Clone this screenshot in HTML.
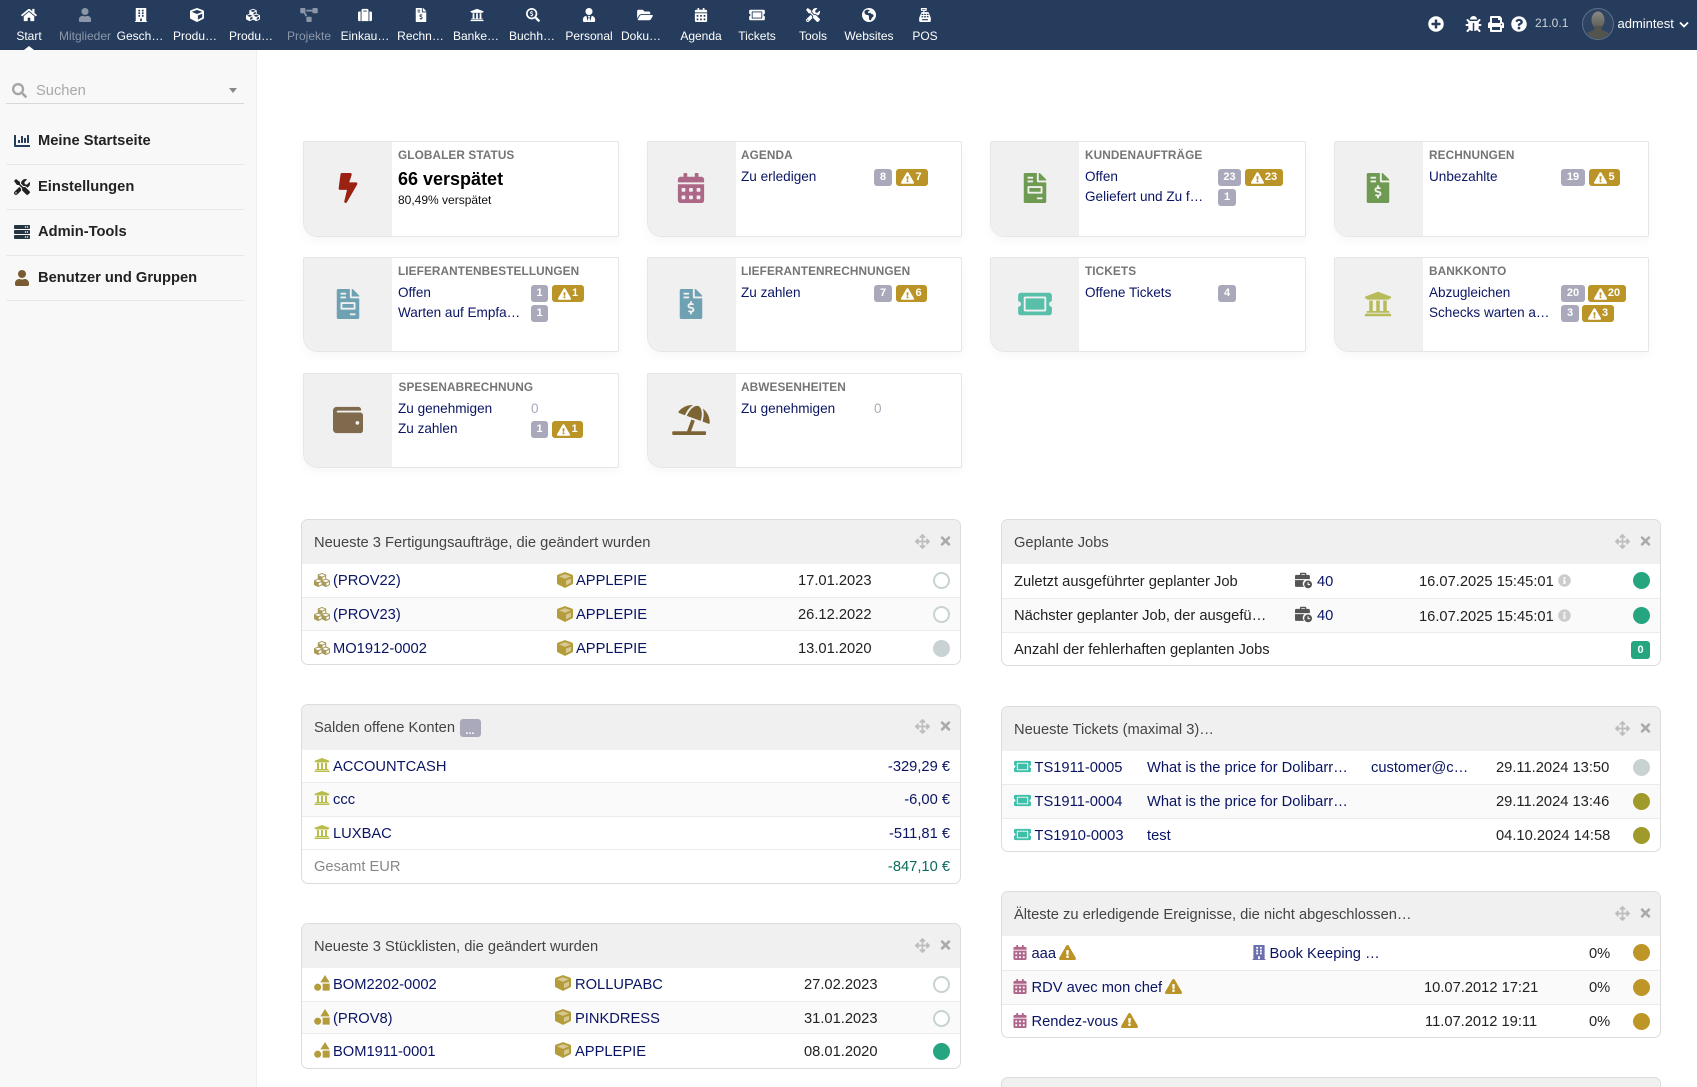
<!DOCTYPE html>
<html lang="de"><head><meta charset="utf-8"><title>Dolibarr</title>
<style>
html{margin:0;padding:0;background:#fff;overflow:hidden;width:1697px;height:1087px}
body{margin:0;padding:0;background:#fff;position:relative;width:1697px;height:1087px;overflow:hidden;font-family:"Liberation Sans",sans-serif;font-size:14.7px;color:#222}
div,span,svg{position:absolute;box-sizing:border-box}
.t{white-space:nowrap;line-height:20px;height:20px}
.n{color:#0a1464}
.m{top:26px;width:56px;text-align:center;font-size:12px;line-height:20px;color:#fff;white-space:nowrap}
.d{color:#8b97a9}
.mi{top:8px;width:20px;height:14px;fill:#fff}
.mi.d{fill:#8b97a9}
.sb{left:38px;font-weight:700;font-size:14.7px;color:#222}
.sl{left:6px;width:238px;height:1px;background:#e8e8e8}
.si{left:14px;width:16px;height:16px}
.c{width:316px;height:95px;background:#fff;border:1px solid #e6e6e6;border-radius:2px 2px 2px 15px;box-shadow:0 4px 10px rgba(0,0,0,.035);overflow:hidden}
.c i{position:absolute;left:0;top:0;bottom:0;width:88px;background:#f0f0f0}
.ti{font-size:11.8px;font-weight:700;color:#757575;letter-spacing:.1px}
.r{font-size:13.55px;color:#0a1464}
.b{height:17px;border-radius:3px;color:#fff;font-size:11px;font-weight:700;display:flex;align-items:center;justify-content:center;line-height:17px}
.g{background:#a9a9bb}
.y{background:#bb9427}
.b svg{position:static;width:13px;height:12px;fill:#fff;margin-right:1px}
.p{background:#fff;border:1px solid #dcdcdc;border-radius:7px;overflow:hidden}
.ph{background:#f0f0f0;left:0;right:0;top:0}
.ev{background:#fafafa;left:0;right:0}
.se{left:0;right:0;height:1px;background:#ebebeb}
.h{color:#444}
.mv{width:15px;height:15px;fill:#bdbdbd}
.cl{width:11px;height:14px;fill:#aaa}
.k{width:17px;height:17px;border-radius:50%}
.o{border:2px solid #c9d2d2;background:#fff}
.ic{width:16px;height:16px}
.cu{fill:#b49c3a}
.cs{fill:#a89a58}
.bk{fill:#b8bd4a}
.tk{fill:#3fbfa8}
.cal{fill:#b0668a}
.wr{fill:#bb9427}
.rt{text-align:right}
</style></head><body>
<svg width="0" height="0" style="position:absolute"><defs>
<symbol id="home" viewBox="0 0 576 512"><path d="M280.37 148.26L96 300.11V464a16 16 0 0 0 16 16l112.06-.29a16 16 0 0 0 15.92-16V368a16 16 0 0 1 16-16h64a16 16 0 0 1 16 16v95.64a16 16 0 0 0 16 16.05L464 480a16 16 0 0 0 16-16V300L295.67 148.26a12.19 12.19 0 0 0-15.3 0zM571.6 251.47L488 182.56V44.05a12 12 0 0 0-12-12h-56a12 12 0 0 0-12 12v72.61L318.47 43a48 48 0 0 0-61 0L4.34 251.47a12 12 0 0 0-1.6 16.9l25.5 31A12 12 0 0 0 45.15 301l235.22-193.74a12.19 12.19 0 0 1 15.3 0L530.9 301a12 12 0 0 0 16.9-1.6l25.5-31a12 12 0 0 0-1.7-16.93z"/></symbol>
<symbol id="user" viewBox="0 0 448 512"><path d="M224 256c70.7 0 128-57.3 128-128S294.7 0 224 0 96 57.3 96 128s57.3 128 128 128zm89.6 32h-16.7c-22.2 10.2-46.9 16-72.9 16s-50.6-5.8-72.9-16h-16.7C60.2 288 0 348.2 0 422.4V464c0 26.5 21.5 48 48 48h352c26.5 0 48-21.5 48-48v-41.6c0-74.2-60.2-134.4-134.4-134.4z"/></symbol>
<symbol id="bld" viewBox="0 0 448 512"><path d="M436 480h-20V24c0-13.255-10.745-24-24-24H56C42.745 0 32 10.745 32 24v456H12c-6.627 0-12 5.373-12 12v20h448v-20c0-6.627-5.373-12-12-12zM128 76c0-6.627 5.373-12 12-12h40c6.627 0 12 5.373 12 12v40c0 6.627-5.373 12-12 12h-40c-6.627 0-12-5.373-12-12V76zm0 96c0-6.627 5.373-12 12-12h40c6.627 0 12 5.373 12 12v40c0 6.627-5.373 12-12 12h-40c-6.627 0-12-5.373-12-12v-40zm52 148h-40c-6.627 0-12-5.373-12-12v-40c0-6.627 5.373-12 12-12h40c6.627 0 12 5.373 12 12v40c0 6.627-5.373 12-12 12zm76 160h-64v-84c0-6.627 5.373-12 12-12h40c6.627 0 12 5.373 12 12v84zm64-172c0 6.627-5.373 12-12 12h-40c-6.627 0-12-5.373-12-12v-40c0-6.627 5.373-12 12-12h40c6.627 0 12 5.373 12 12v40zm0-96c0 6.627-5.373 12-12 12h-40c-6.627 0-12-5.373-12-12v-40c0-6.627 5.373-12 12-12h40c6.627 0 12 5.373 12 12v40zm0-96c0 6.627-5.373 12-12 12h-40c-6.627 0-12-5.373-12-12V76c0-6.627 5.373-12 12-12h40c6.627 0 12 5.373 12 12v40z"/></symbol>
<symbol id="cube" viewBox="0 0 512 512"><path d="M239.1 6.3l-208 78c-18.7 7-31.1 25-31.1 45v225.100c0 18.200 10.300 34.800 26.500 42.900l208 104c13.500 6.800 29.400 6.800 42.900 0l208-104c16.300-8.100 26.500-24.800 26.500-42.900V129.300c0-20-12.400-37.900-31.100-44.900l-208-78C262 2.200 250 2.200 239.100 6.300zM256 68.400l192 72v1.100l-192 78-192-78v-1.100l192-72zm32 356V275.500l160-65v133.900l-160 80z"/></symbol>
<symbol id="cubef" viewBox="0 0 512 512"><path opacity=".55" d="M256 40 490 130v220L256 480 22 350V130z"/><path d="M239.1 6.3l-208 78c-18.7 7-31.1 25-31.1 45v225.100c0 18.200 10.300 34.800 26.500 42.900l208 104c13.500 6.800 29.400 6.800 42.900 0l208-104c16.300-8.100 26.500-24.800 26.500-42.900V129.300c0-20-12.400-37.900-31.100-44.900l-208-78C262 2.200 250 2.200 239.100 6.300zM256 68.400l192 72v1.100l-192 78-192-78v-1.100l192-72zm32 356V275.500l160-65v133.900l-160 80z"/></symbol>
<symbol id="cubes" viewBox="0 0 512 512"><path d="M488.6 250.2L392 214V105.500c0-15-9.300-28.400-23.400-33.700l-100-37.500c-8.100-3.100-17.100-3.100-25.300 0l-100 37.500c-14.100 5.300-23.400 18.700-23.400 33.700V214l-96.600 36.200C9.300 255.500 0 268.900 0 283.900V394c0 13.600 7.700 26.100 19.900 32.200l100 50c10.100 5.100 22.100 5.100 32.200 0l103.900-52 103.900 52c10.100 5.100 22.100 5.100 32.200 0l100-50c12.200-6.100 19.900-18.600 19.900-32.200V283.900c0-15-9.300-28.400-23.400-33.700zM358 214.800l-85 31.900v-68.200l85-37v73.300zM154 104.100l102-38.200 102 38.200v.6l-102 41.400-102-41.400v-.6zm84 291.100l-85 42.500v-79.100l85-38.800v75.400zm0-112l-102 41.400-102-41.400v-.6l102-38.200 102 38.200v.6zm240 112l-85 42.500v-79.100l85-38.800v75.400zm0-112l-102 41.400-102-41.400v-.6l102-38.200 102 38.200v.6z"/></symbol>
<symbol id="proj" viewBox="0 0 640 512"><path d="M384 320H256c-17.67 0-32 14.33-32 32v128c0 17.67 14.33 32 32 32h128c17.67 0 32-14.33 32-32V352c0-17.67-14.33-32-32-32zM192 32c0-17.67-14.33-32-32-32H32C14.33 0 0 14.33 0 32v128c0 17.67 14.33 32 32 32h95.72l73.16 128.03c11.66-19.83 33.16-32.03 56.12-32.03h-.5L184.28 160H192V32zM608 0H480c-17.67 0-32 14.33-32 32v32H224v64h224v32c0 17.67 14.33 32 32 32h128c17.67 0 32-14.33 32-32V32c0-17.67-14.33-32-32-32z"/></symbol>
<symbol id="case" viewBox="0 0 512 512"><path d="M128 480h256V80c0-26.500-21.500-48-48-48H176c-26.500 0-48 21.500-48 48v400zm64-384h128v32H192V96zm320 80v256c0 26.500-21.500 48-48 48h-48V128h48c26.500 0 48 21.500 48 48zM96 480H48c-26.500 0-48-21.500-48-48V176c0-26.500 21.500-48 48-48h48v352z"/></symbol>
<symbol id="bill" viewBox="0 0 384 512"><path d="M377 105L279.100 7c-4.500-4.500-10.600-7-17-7H256v128h128v-6.100c0-6.300-2.500-12.400-7-16.900zm-153 31V0H24C10.700 0 0 10.700 0 24v464c0 13.300 10.700 24 24 24h336c13.300 0 24-10.700 24-24V160H248c-13.200 0-24-10.800-24-24zM64 72c0-4.420 3.580-8 8-8h80c4.420 0 8 3.580 8 8v16c0 4.420-3.580 8-8 8H72c-4.420 0-8-3.580-8-8V72zm0 64c0-4.420 3.580-8 8-8h80c4.420 0 8 3.580 8 8v16c0 4.420-3.580 8-8 8H72c-4.420 0-8-3.580-8-8v-16zm144 263.880V424c0 4.420-3.580 8-8 8h-16c-4.420 0-8-3.580-8-8v-24.290c-11.290-.58-22.270-4.520-31.370-11.350-3.900-2.930-4.100-8.770-.57-12.140l11.750-11.210c2.770-2.640 6.890-2.760 10.130-.73 3.870 2.420 8.260 3.720 12.820 3.720h28.110c6.500 0 11.800-5.920 11.800-13.190 0-5.950-3.610-11.190-8.770-12.730l-45-13.500c-18.590-5.580-31.580-23.420-31.580-43.390 0-24.520 19.050-44.440 42.670-45.070V216c0-4.420 3.580-8 8-8h16c4.420 0 8 3.580 8 8v24.290c11.290.58 22.270 4.510 31.370 11.350 3.900 2.930 4.100 8.770.57 12.140l-11.750 11.210c-2.770 2.640-6.890 2.760-10.130.73-3.870-2.430-8.260-3.720-12.820-3.720h-28.110c-6.500 0-11.800 5.920-11.800 13.190 0 5.950 3.610 11.190 8.770 12.730l45 13.500c18.590 5.580 31.580 23.420 31.580 43.390 0 24.530-19.050 44.440-42.670 45.070z"/></symbol>
<symbol id="ord" viewBox="0 0 384 512"><path d="M288 256H96v64h192v-64zm89-151L279.100 7c-4.500-4.500-10.600-7-17-7H256v128h128v-6.100c0-6.300-2.500-12.400-7-16.900zm-153 31V0H24C10.700 0 0 10.700 0 24v464c0 13.300 10.700 24 24 24h336c13.300 0 24-10.700 24-24V160H248c-13.200 0-24-10.800-24-24zM64 72c0-4.420 3.580-8 8-8h80c4.420 0 8 3.580 8 8v16c0 4.420-3.580 8-8 8H72c-4.420 0-8-3.580-8-8V72zm0 64c0-4.420 3.580-8 8-8h80c4.420 0 8 3.580 8 8v16c0 4.420-3.580 8-8 8H72c-4.420 0-8-3.580-8-8v-16zm256 304c0 4.420-3.580 8-8 8h-80c-4.420 0-8-3.580-8-8v-16c0-4.420 3.580-8 8-8h80c4.420 0 8 3.580 8 8v16zm0-200v96c0 8.840-7.160 16-16 16H80c-8.840 0-16-7.160-16-16v-96c0-8.840 7.160-16 16-16h224c8.840 0 16 7.160 16 16z"/></symbol>
<symbol id="bank" viewBox="0 0 512 512"><path d="M496 128v16a8 8 0 0 1-8 8h-24v12c0 6.627-5.373 12-12 12H60c-6.627 0-12-5.373-12-12v-12H24a8 8 0 0 1-8-8v-16a8 8 0 0 1 4.941-7.392l232-88a7.996 7.996 0 0 1 6.118 0l232 88A8 8 0 0 1 496 128zm-24 304H40c-13.255 0-24 10.745-24 24v16a8 8 0 0 0 8 8h464a8 8 0 0 0 8-8v-16c0-13.255-10.745-24-24-24zM96 192v192H60c-6.627 0-12 5.373-12 12v20h416v-20c0-6.627-5.373-12-12-12h-36V192h-64v192h-64V192h-64v192h-64V192H96z"/></symbol>
<symbol id="acct" viewBox="0 0 512 512"><path d="M505.040 442.660l-99.710-99.690c-4.500-4.500-10.600-7-17-7h-16.300c27.600-35.300 44-79.690 44-127.990C416.030 93.090 322.920 0 208.020 0S0 93.090 0 207.980s93.110 207.980 208.020 207.980c48.300 0 92.710-16.400 128.010-44v16.300c0 6.400 2.500 12.500 7 17l99.710 99.690c9.400 9.400 24.600 9.400 33.900 0l28.300-28.300c9.400-9.400 9.400-24.590.1-33.990zm-297.020-90.700c-79.540 0-144-64.340-144-143.980 0-79.530 64.350-143.980 144-143.980 79.540 0 144 64.340 144 143.980 0 79.530-64.350 143.980-144 143.980zm27.110-152.540l-45.010-13.500c-5.160-1.550-8.770-6.780-8.770-12.730 0-7.270 5.300-13.190 11.800-13.190h28.110c4.560 0 8.960 1.290 12.820 3.720 3.240 2.030 7.360 1.910 10.130-.73l11.750-11.210c3.530-3.370 3.330-9.210-.57-12.140-9.100-6.830-20.080-10.770-31.370-11.350V112c0-4.420-3.580-8-8-8h-16c-4.420 0-8 3.580-8 8v16.120c-23.630.63-42.680 20.550-42.680 45.070 0 19.970 12.990 37.810 31.580 43.390l45.010 13.500c5.160 1.550 8.770 6.780 8.770 12.730 0 7.270-5.300 13.190-11.800 13.190h-28.100c-4.560 0-8.960-1.290-12.820-3.720-3.240-2.030-7.360-1.910-10.130.73l-11.750 11.210c-3.530 3.370-3.330 9.210.57 12.140 9.100 6.830 20.080 10.770 31.370 11.350V304c0 4.420 3.580 8 8 8h16c4.420 0 8-3.580 8-8v-16.120c23.630-.63 42.680-20.540 42.680-45.070 0-19.970-12.990-37.810-31.590-43.390z"/></symbol>
<symbol id="pers" viewBox="0 0 448 512"><path d="M224 256c70.700 0 128-57.300 128-128S294.700 0 224 0 96 57.300 96 128s57.300 128 128 128zm95.800 32.600L272 480l-32-136 32-56h-96l32 56-32 136-47.800-191.400C56.900 292 0 350.300 0 422.400V464c0 26.500 21.500 48 48 48h352c26.500 0 48-21.500 48-48v-41.600c0-72.100-56.900-130.400-128.200-133.800z"/></symbol>
<symbol id="fold" viewBox="0 0 576 512"><path d="M572.694 292.093L500.270 416.248A63.997 63.997 0 0 1 444.989 448H45.025c-18.523 0-30.064-20.093-20.731-36.093l72.424-124.155A64 64 0 0 1 152 256h399.964c18.523 0 30.064 20.093 20.730 36.093zM152 224h328v-48c0-26.510-21.490-48-48-48H272l-64-64H48C21.490 64 0 85.490 0 112v278.046l69.077-118.418C86.214 242.250 118.160 224 152 224z"/></symbol>
<symbol id="cal" viewBox="0 0 448 512"><path d="M0 464c0 26.500 21.500 48 48 48h352c26.500 0 48-21.500 48-48V192H0v272zm320-196c0-6.600 5.400-12 12-12h40c6.600 0 12 5.400 12 12v40c0 6.600-5.400 12-12 12h-40c-6.600 0-12-5.400-12-12v-40zm0 128c0-6.600 5.400-12 12-12h40c6.600 0 12 5.400 12 12v40c0 6.600-5.400 12-12 12h-40c-6.600 0-12-5.400-12-12v-40zM192 268c0-6.600 5.400-12 12-12h40c6.600 0 12 5.400 12 12v40c0 6.600-5.400 12-12 12h-40c-6.600 0-12-5.400-12-12v-40zm0 128c0-6.600 5.400-12 12-12h40c6.600 0 12 5.400 12 12v40c0 6.600-5.400 12-12 12h-40c-6.600 0-12-5.400-12-12v-40zM64 268c0-6.600 5.400-12 12-12h40c6.600 0 12 5.400 12 12v40c0 6.600-5.400 12-12 12H76c-6.600 0-12-5.400-12-12v-40zm0 128c0-6.600 5.400-12 12-12h40c6.600 0 12 5.400 12 12v40c0 6.600-5.400 12-12 12H76c-6.600 0-12-5.400-12-12v-40zM400 64h-48V16c0-8.800-7.200-16-16-16h-32c-8.800 0-16 7.200-16 16v48H160V16c0-8.800-7.200-16-16-16h-32c-8.800 0-16 7.200-16 16v48H48C21.500 64 0 85.500 0 112v48h448v-48c0-26.500-21.500-48-48-48z"/></symbol>
<symbol id="tick" viewBox="0 0 576 512"><path d="M128 160h320v192H128V160zm400 96c0 26.510 21.490 48 48 48v96c0 26.510-21.490 48-48 48H48c-26.510 0-48-21.490-48-48v-96c26.510 0 48-21.490 48-48s-21.490-48-48-48v-96c0-26.510 21.490-48 48-48h480c26.510 0 48 21.490 48 48v96c-26.510 0-48 21.490-48 48zm-48-104c0-13.255-10.745-24-24-24H120c-13.255 0-24 10.745-24 24v208c0 13.255 10.745 24 24 24h336c13.255 0 24-10.745 24-24V152z"/></symbol>
<symbol id="tools" viewBox="0 0 512 512"><path d="M501.100 395.700L384 278.600c-23.100-23.100-57.600-27.600-85.400-13.900L192 158.100V96L64 0 0 64l96 128h62.100l106.600 106.600c-13.600 27.800-9.200 62.300 13.900 85.400l117.100 117.100c14.600 14.600 38.200 14.600 52.700 0l52.700-52.700c14.500-14.600 14.500-38.200 0-52.700zM331.700 225c28.300 0 54.900 11 74.900 31l19.400 19.400c15.800-6.900 30.800-16.500 43.800-29.500 37.100-37.100 49.700-89.300 37.900-136.700-2.200-9-13.500-12.100-20.100-5.500l-74.400 74.400-67.900-11.300L334 98.900l74.400-74.400c6.600-6.600 3.400-17.900-5.700-20.200-47.400-11.700-99.600.9-136.600 37.900-28.500 28.500-41.900 66.100-41.200 103.600l82.100 82.100c8.100-1.900 16.500-2.900 24.700-2.900zm-103.900 82l-56.700-56.700L18.700 402.800c-25 25-25 65.500 0 90.500s65.500 25 90.500 0l123.600-123.600c-7.600-19.900-9.900-41.600-5-62.700zM64 472c-13.200 0-24-10.800-24-24 0-13.300 10.700-24 24-24s24 10.700 24 24c0 13.200-10.700 24-24 24z"/></symbol>
<symbol id="globe" viewBox="0 0 24 24"><path fill-rule="evenodd" d="M12 0a12 12 0 1 1 0 24 12 12 0 0 1 0-24zM7 3 4 6l1 4 3 2 3 0 1 3 0 5 3 1 2-4 3-3-1-3-3-1-2-2-3 1-1-2 2-2 2-1-3-1z"/></symbol>
<symbol id="pos" viewBox="0 0 24 24"><path fill-rule="evenodd" d="M5 0h10v5h-4v2h7l4 10v5a2 2 0 0 1-2 2H4a2 2 0 0 1-2-2v-5L6 7h3V5H5zM7 2v1h6V2zM6 10v2h3v-2zM10.500 10v2h3v-2zM15 10v2h3v-2zM6 14v2h3v-2zM10.500 14v2h3v-2zM15 14v2h3v-2zM7 19v2h10v-2z"/></symbol>
<symbol id="plus" viewBox="0 0 512 512"><path d="M256 8C119 8 8 119 8 256s111 248 248 248 248-111 248-248S393 8 256 8zm144 276c0 6.600-5.400 12-12 12h-92v92c0 6.600-5.400 12-12 12h-56c-6.600 0-12-5.400-12-12v-92h-92c-6.600 0-12-5.400-12-12v-56c0-6.600 5.400-12 12-12h92v-92c0-6.600 5.400-12 12-12h56c6.600 0 12 5.400 12 12v92h92c6.600 0 12 5.400 12 12v56z"/></symbol>
<symbol id="bug" viewBox="0 0 512 512"><path d="M511.988 288.900c-.478 17.430-15.217 31.100-32.653 31.100H424v16c0 21.864-4.882 42.584-13.600 61.145l60.228 60.228c12.496 12.497 12.496 32.758 0 45.255-12.498 12.497-32.759 12.496-45.256 0l-54.736-54.736C345.886 467.965 314.351 480 280 480V236c0-6.627-5.373-12-12-12h-24c-6.627 0-12 5.373-12 12v244c-34.351 0-65.886-12.035-90.636-32.108l-54.736 54.736c-12.498 12.497-32.759 12.496-45.256 0-12.496-12.497-12.496-32.758 0-45.255l60.228-60.228C92.882 378.584 88 357.864 88 336v-16H32.666C15.230 320 .491 306.330.013 288.900-.484 270.816 14.028 256 32 256h56v-58.745l-46.628-46.628c-12.496-12.497-12.496-32.758 0-45.255 12.498-12.497 32.758-12.497 45.256 0L141.255 160h229.489l54.627-54.627c12.498-12.497 32.758-12.497 45.256 0 12.496 12.497 12.496 32.758 0 45.255L424 197.255V256h56c17.972 0 32.484 14.816 31.988 32.900zM257 0c-61.856 0-112 50.144-112 112h224C369 50.144 318.856 0 257 0z"/></symbol>
<symbol id="print" viewBox="0 0 512 512"><path d="M448 192V77.250c0-8.490-3.370-16.620-9.370-22.630L393.370 9.370c-6-6-14.140-9.370-22.630-9.370H96C78.330 0 64 14.330 64 32v160c-35.350 0-64 28.650-64 64v112c0 8.840 7.160 16 16 16h48v96c0 17.670 14.330 32 32 32h320c17.670 0 32-14.330 32-32v-96h48c8.840 0 16-7.160 16-16V256c0-35.350-28.650-64-64-64zm-64 256H128v-96h256v96zm0-224H128V64h192v48c0 8.840 7.160 16 16 16h48v96zm48 72c-13.250 0-24-10.750-24-24 0-13.260 10.750-24 24-24s24 10.740 24 24c0 13.250-10.750 24-24 24z"/></symbol>
<symbol id="help" viewBox="0 0 512 512"><path d="M504 256c0 136.997-111.043 248-248 248S8 392.997 8 256C8 119.083 119.043 8 256 8s248 111.083 248 248zM262.655 90c-54.497 0-89.255 22.957-116.549 63.758-3.536 5.286-2.353 12.415 2.715 16.258l34.699 26.310c5.205 3.947 12.621 3.008 16.665-2.122 17.864-22.658 30.113-35.797 57.303-35.797 20.429 0 45.698 13.148 45.698 32.958 0 14.976-12.363 22.667-32.534 33.976C247.128 238.528 216 254.941 216 296v4c0 6.627 5.373 12 12 12h56c6.627 0 12-5.373 12-12v-1.333c0-28.462 83.186-29.647 83.186-106.667 0-58.002-60.165-102-116.531-102zM256 338c-25.365 0-46 20.635-46 46 0 25.364 20.635 46 46 46s46-20.636 46-46c0-25.365-20.635-46-46-46z"/></symbol>
<symbol id="bolt" viewBox="0 0 320 512"><path d="M296 160H180.600l42.600-129.800C227.200 15 215.700 0 200 0H56C44 0 33.800 8.900 32.200 20.800l-32 240C-1.700 275.200 9.500 288 24 288h118.700L96.600 482.500c-3.600 15.200 8 29.500 23.300 29.500 8.400 0 16.400-4.400 20.800-12l176-304c9.300-15.900-2.200-36-20.700-36z"/></symbol>
<symbol id="wall" viewBox="0 0 512 512"><path d="M461.200 128H80c-8.840 0-16-7.160-16-16s7.160-16 16-16h384c8.840 0 16-7.160 16-16 0-26.510-21.490-48-48-48H64C28.650 32 0 60.650 0 96v320c0 35.350 28.650 64 64 64h397.200c28.020 0 50.800-21.530 50.800-48V176c0-26.470-22.780-48-50.800-48zM416 336c-17.670 0-32-14.330-32-32s14.330-32 32-32 32 14.330 32 32-14.330 32-32 32z"/></symbol>
<symbol id="umb" viewBox="0 0 640 512"><path d="M115.380 136.900l102.110 37.180c35.190-81.540 86.210-144.290 139-173.700-95.880-4.890-188.780 36.960-248.530 111.800-6.690 8.400-2.670 21.050 7.420 24.720zm132.250 48.160l238.480 86.830c35.760-121.380 18.700-231.660-42.630-253.980-7.400-2.700-15.130-4-23.090-4-58.020.01-128.270 69.170-172.760 171.150zM521.480 60.500c6.220 16.300 10.830 34.600 13.200 55.190 5.740 49.890-1.420 108.230-18.950 166.900l102.620 37.360c10.090 3.670 21.310-3.430 21.570-14.170 2.320-95.690-41.910-187.440-118.440-245.280zM560 447.980H321.060L386 269.500l-60.140-21.900-72.900 200.370H16c-8.840 0-16 7.160-16 16.010v32.010C0 504.830 7.160 512 16 512h544c8.840 0 16-7.170 16-16.010v-32.010c0-8.840-7.160-16-16-16z"/></symbol>
<symbol id="mv" viewBox="0 0 512 512"><path d="M352.201 425.775l-79.196 79.196c-9.373 9.373-24.568 9.373-33.941 0l-79.196-79.196c-15.119-15.119-4.411-40.971 16.971-40.970h51.162L228 284H127.196v51.162c0 21.382-25.851 32.090-40.971 16.971L7.029 272.937c-9.373-9.373-9.373-24.569 0-33.941L86.225 159.800c15.119-15.119 40.971-4.411 40.971 16.971V228H228V127.196h-51.230c-21.382 0-32.090-25.851-16.971-40.971l79.196-79.196c9.373-9.373 24.568-9.373 33.941 0l79.196 79.196c15.119 15.119 4.411 40.971-16.971 40.971h-51.162V228h100.804v-51.162c0-21.382 25.851-32.090 40.970-16.971l79.196 79.196c9.373 9.373 9.373 24.569 0 33.941L425.773 352.200c-15.119 15.119-40.971 4.411-40.970-16.971V284H284v100.804h51.230c21.382 0 32.090 25.851 16.971 40.971z"/></symbol>
<symbol id="cl" viewBox="0 0 352 512"><path d="M242.72 256l100.070-100.070c12.280-12.280 12.280-32.190 0-44.480l-22.240-22.240c-12.280-12.280-32.190-12.280-44.480 0L176 189.280 75.930 89.210c-12.280-12.280-32.190-12.280-44.480 0L9.210 111.450c-12.280 12.280-12.280 32.190 0 44.480L109.280 256 9.210 356.070c-12.280 12.280-12.280 32.190 0 44.480l22.240 22.240c12.280 12.280 32.200 12.280 44.480 0L176 322.720l100.070 100.070c12.280 12.280 32.200 12.280 44.480 0l22.240-22.240c12.280-12.280 12.280-32.190 0-44.480L242.720 256z"/></symbol>
<symbol id="warn" viewBox="0 0 576 512"><path d="M569.517 440.013C587.975 472.007 564.806 512 527.940 512H48.054c-36.937 0-59.999-40.055-41.577-71.987L246.423 23.985c18.467-32.009 64.720-31.951 83.154 0l239.940 416.028zM288 354c-25.405 0-46 20.595-46 46s20.595 46 46 46 46-20.595 46-46-20.595-46-46-46zm-43.673-165.346l7.418 136c.347 6.364 5.609 11.346 11.982 11.346h48.546c6.373 0 11.635-4.982 11.982-11.346l7.418-136c.375-6.874-5.098-12.654-11.982-12.654h-63.383c-6.884 0-12.356 5.780-11.981 12.654z"/></symbol>
<symbol id="chart" viewBox="0 0 512 512"><path d="M332.800 320h38.400c6.400 0 12.800-6.400 12.800-12.800V172.800c0-6.400-6.400-12.800-12.800-12.800h-38.400c-6.400 0-12.800 6.400-12.800 12.800v134.400c0 6.400 6.400 12.800 12.800 12.800zm96 0h38.400c6.400 0 12.800-6.400 12.800-12.800V76.800c0-6.400-6.400-12.800-12.800-12.800h-38.400c-6.400 0-12.800 6.400-12.800 12.800v230.400c0 6.400 6.400 12.800 12.800 12.800zm-288 0h38.400c6.400 0 12.800-6.400 12.800-12.800v-70.400c0-6.400-6.400-12.800-12.800-12.800h-38.400c-6.400 0-12.800 6.400-12.800 12.800v70.400c0 6.400 6.400 12.800 12.800 12.800zm96 0h38.400c6.400 0 12.800-6.400 12.800-12.800V108.800c0-6.400-6.400-12.800-12.800-12.800h-38.400c-6.400 0-12.800 6.400-12.800 12.800v198.400c0 6.400 6.400 12.800 12.800 12.800zM496 384H64V80c0-8.840-7.160-16-16-16H16C7.160 64 0 71.160 0 80v336c0 17.670 14.330 32 32 32h464c8.840 0 16-7.160 16-16v-32c0-8.840-7.160-16-16-16z"/></symbol>
<symbol id="srv" viewBox="0 0 512 512"><path d="M480 160H32c-17.673 0-32-14.327-32-32V64c0-17.673 14.327-32 32-32h448c17.673 0 32 14.327 32 32v64c0 17.673-14.327 32-32 32zm-48-88c-13.255 0-24 10.745-24 24s10.745 24 24 24 24-10.745 24-24-10.745-24-24-24zm-64 0c-13.255 0-24 10.745-24 24s10.745 24 24 24 24-10.745 24-24-10.745-24-24-24zm112 248H32c-17.673 0-32-14.327-32-32v-64c0-17.673 14.327-32 32-32h448c17.673 0 32 14.327 32 32v64c0 17.673-14.327 32-32 32zm-48-88c-13.255 0-24 10.745-24 24s10.745 24 24 24 24-10.745 24-24-10.745-24-24-24zm-64 0c-13.255 0-24 10.745-24 24s10.745 24 24 24 24-10.745 24-24-10.745-24-24-24zm112 248H32c-17.673 0-32-14.327-32-32v-64c0-17.673 14.327-32 32-32h448c17.673 0 32 14.327 32 32v64c0 17.673-14.327 32-32 32zm-48-88c-13.255 0-24 10.745-24 24s10.745 24 24 24 24-10.745 24-24-10.745-24-24-24zm-64 0c-13.255 0-24 10.745-24 24s10.745 24 24 24 24-10.745 24-24-10.745-24-24-24z"/></symbol>
<symbol id="bom" viewBox="0 0 24 24"><path d="M16.500 0 23.500 11h-14zM5.500 13a5.300 5.300 0 1 1 0 10.600 5.300 5.300 0 0 1 0-10.600zM13 13h10.500v10.500H13z"/></symbol>
<symbol id="job" viewBox="0 0 24 24"><path fill-rule="evenodd" d="M7 4V2.500A1.500 1.500 0 0 1 8.500 1h6A1.500 1.500 0 0 1 16 2.500V4h3a2 2 0 0 1 2 2v4H0V6a2 2 0 0 1 2-2zM9 3v1h5V3zM0 11.500h13.500A6 6 0 0 0 13 21H2a2 2 0 0 1-2-2z"/><path fill-rule="evenodd" d="M18.500 12a5.500 5.500 0 1 1 0 11 5.500 5.500 0 0 1 0-11zM17.700 14.500v4h3.500v-1.500h-2v-2.500z"/></symbol>
<symbol id="info" viewBox="0 0 512 512"><path d="M256 8C119.043 8 8 119.083 8 256c0 136.997 111.043 248 248 248s248-111.003 248-248C504 119.083 392.957 8 256 8zm0 110c23.196 0 42 18.804 42 42s-18.804 42-42 42-42-18.804-42-42 18.804-42 42-42zm56 254c0 6.627-5.373 12-12 12h-88c-6.627 0-12-5.373-12-12v-24c0-6.627 5.373-12 12-12h12v-64h-12c-6.627 0-12-5.373-12-12v-24c0-6.627 5.373-12 12-12h64c6.627 0 12 5.373 12 12v100h12c6.627 0 12 5.373 12 12v24z"/></symbol>
<symbol id="srch" viewBox="0 0 512 512"><path d="M505 442.700L405.300 343c-4.500-4.500-10.600-7-17-7H372c27.600-35.300 44-79.700 44-128C416 93.100 322.900 0 208 0S0 93.100 0 208s93.100 208 208 208c48.300 0 92.700-16.400 128-44v16.300c0 6.400 2.500 12.500 7 17l99.700 99.700c9.400 9.400 24.600 9.400 33.900 0l28.300-28.300c9.400-9.400 9.400-24.600.1-34zM208 336c-70.700 0-128-57.200-128-128 0-70.700 57.200-128 128-128 70.700 0 128 57.200 128 128 0 70.700-57.200 128-128 128z"/></symbol>
<linearGradient id="hd" x1="0" y1="0" x2="0" y2="1"><stop offset="0" stop-color="#8a8a85"/><stop offset="1" stop-color="#5a5a56"/></linearGradient>
</defs></svg>

<div style="left:0;top:0;width:1697px;height:50px;background:#263c5c"></div>
<svg class="mi" style="left:19px"><use href="#home"/></svg>
<svg class="mi d" style="left:75px"><use href="#user"/></svg>
<svg class="mi" style="left:131px"><use href="#bld"/></svg>
<svg class="mi" style="left:187px"><use href="#cube"/></svg>
<svg class="mi" style="left:243px"><use href="#cubes"/></svg>
<svg class="mi d" style="left:299px"><use href="#proj"/></svg>
<svg class="mi" style="left:355px"><use href="#case"/></svg>
<svg class="mi" style="left:411px"><use href="#bill"/></svg>
<svg class="mi" style="left:467px"><use href="#bank"/></svg>
<svg class="mi" style="left:523px"><use href="#acct"/></svg>
<svg class="mi" style="left:579px"><use href="#pers"/></svg>
<svg class="mi" style="left:635px"><use href="#fold"/></svg>
<svg class="mi" style="left:691px"><use href="#cal"/></svg>
<svg class="mi" style="left:747px"><use href="#tick"/></svg>
<svg class="mi" style="left:803px"><use href="#tools"/></svg>
<svg class="mi" style="left:859px"><use href="#globe"/></svg>
<svg class="mi" style="left:915px"><use href="#pos"/></svg>
<div class="m" style="left:1px">Start</div>
<div class="m d" style="left:57px">Mitglieder</div>
<div class="m" style="left:112px">Gesch…</div>
<div class="m" style="left:167px">Produ…</div>
<div class="m" style="left:223px">Produ…</div>
<div class="m d" style="left:281px">Projekte</div>
<div class="m" style="left:337px">Einkau…</div>
<div class="m" style="left:392.500px">Rechn…</div>
<div class="m" style="left:448px">Banke…</div>
<div class="m" style="left:504px">Buchh…</div>
<div class="m" style="left:561px">Personal</div>
<div class="m" style="left:613px">Doku…</div>
<div class="m" style="left:673px">Agenda</div>
<div class="m" style="left:729px">Tickets</div>
<div class="m" style="left:785px">Tools</div>
<div class="m" style="left:841px">Websites</div>
<div class="m" style="left:897px">POS</div>
<div style="left:24px;top:46px;width:0;height:0;border-left:5px solid transparent;border-right:5px solid transparent;border-bottom:4px solid #fff"></div>

<svg style="left:1428px;top:16px;width:16px;height:16px;fill:#fff"><use href="#plus"/></svg>
<svg style="left:1465px;top:16px;width:17px;height:16px;fill:#fff"><use href="#bug"/></svg>
<svg style="left:1488px;top:16px;width:16px;height:16px;fill:#fff"><use href="#print"/></svg>
<svg style="left:1511px;top:16px;width:16px;height:16px;fill:#fff"><use href="#help"/></svg>
<div class="t" style="left:1535px;top:13px;font-size:12px;color:#cfd4da">21.0.1</div>
<svg style="left:1582px;top:8px;width:32px;height:32px" viewBox="0 0 32 32"><circle cx="16" cy="16" r="15.500" fill="#2e4462" stroke="#5d7089"/><ellipse cx="16" cy="12" rx="6.500" ry="8.500" fill="url(#hd)"/><path d="M13 18h6l1 4 7 3c-3 4-7 6-11 6s-8-2-11-6l7-3z" fill="#54544f"/></svg>
<div class="t" style="left:1617.500px;top:14px;font-size:13px;color:#fff">admintest</div>
<svg style="left:1679px;top:21px;width:10px;height:7px" viewBox="0 0 10 7"><path d="M1 1.500l4 4 4-4" fill="none" stroke="#fff" stroke-width="1.800"/></svg>

<div style="left:0;top:50px;width:257px;height:1037px;background:#f8f8f8;border-right:1px solid #eee"></div>
<svg style="left:12px;top:83px;width:15px;height:15px;fill:#a5a5a5"><use href="#srch"/></svg>
<div class="t" style="left:36px;top:80.500px;color:#a8a8a8">Suchen</div>
<div style="left:229px;top:88px;width:0;height:0;border-left:4px solid transparent;border-right:4px solid transparent;border-top:5px solid #888"></div>
<div style="left:6px;top:103px;width:238px;height:1px;background:#d8d8d8"></div>
<svg class="si" style="top:133px;fill:#263c5c"><use href="#chart"/></svg>
<svg class="si" style="top:179px;fill:#222"><use href="#tools"/></svg>
<svg class="si" style="top:224px;fill:#263340"><use href="#srv"/></svg>
<svg class="si" style="top:270px;fill:#7a5c33"><use href="#user"/></svg>
<div class="t sb" style="top:131px">Meine Startseite</div>
<div class="t sb" style="top:177px">Einstellungen</div>
<div class="t sb" style="top:222px">Admin-Tools</div>
<div class="t sb" style="top:268px">Benutzer und Gruppen</div>
<div class="sl" style="top:164px"></div>
<div class="sl" style="top:209px"></div>
<div class="sl" style="top:255px"></div>
<div class="sl" style="top:300px"></div>

<!-- cards -->
<div class="c" style="left:303px;top:141px;height:96px"><i></i></div>
<div class="c" style="left:647px;top:141px;width:315px;height:96px"><i></i></div>
<div class="c" style="left:990px;top:141px;height:96px"><i></i></div>
<div class="c" style="left:1334px;top:141px;width:315px;height:96px"><i></i></div>
<div class="c" style="left:303px;top:257px"><i></i></div>
<div class="c" style="left:647px;top:257px;width:315px"><i></i></div>
<div class="c" style="left:990px;top:257px"><i></i></div>
<div class="c" style="left:1334px;top:257px;width:315px"><i></i></div>
<div class="c" style="left:303px;top:373px"><i></i></div>
<div class="c" style="left:647px;top:373px;width:315px"><i></i></div>

<svg style="left:333px;top:173px;width:30px;height:30px;fill:#9a2213"><use href="#bolt"/></svg>
<svg style="left:676px;top:173px;width:30px;height:30px;fill:#ac6886"><use href="#cal"/></svg>
<svg style="left:1020px;top:173px;width:30px;height:30px;fill:#6f9a51"><use href="#ord"/></svg>
<svg style="left:1363px;top:173px;width:30px;height:30px;fill:#6f9a51"><use href="#bill"/></svg>
<svg style="left:333px;top:289px;width:30px;height:30px;fill:#6ea1b2"><use href="#ord"/></svg>
<svg style="left:676px;top:289px;width:30px;height:30px;fill:#6ea1b2"><use href="#bill"/></svg>
<svg style="left:1018px;top:289px;width:34px;height:30px;fill:#5abfa9"><use href="#tick"/></svg>
<svg style="left:1364px;top:290px;width:28px;height:28px;fill:#b8bb5a"><use href="#bank"/></svg>
<svg style="left:333px;top:405px;width:30px;height:30px;fill:#7f6a4e"><use href="#wall"/></svg>
<svg style="left:672px;top:405px;width:38px;height:30px;fill:#7d6435"><use href="#umb"/></svg>

<div class="t ti" style="left:398px;top:145px">GLOBALER STATUS</div>
<div class="t" style="left:398px;top:168.500px;font-size:18px;font-weight:700;color:#000">66 verspätet</div>
<div class="t" style="left:398px;top:190px;font-size:12px;color:#111">80,49% verspätet</div>

<div class="t ti" style="left:741px;top:145px">AGENDA</div>
<div class="t r" style="left:741px;top:167px">Zu erledigen</div>
<span class="b g" style="left:874px;top:169px;width:18px">8</span>
<span class="b y" style="left:895.500px;top:169px;width:32px"><svg><use href="#warn"/></svg>7</span>

<div class="t ti" style="left:1085px;top:145px">KUNDENAUFTRÄGE</div>
<div class="t r" style="left:1085px;top:167px">Offen</div>
<div class="t r" style="left:1085px;top:187px">Geliefert und Zu f…</div>
<span class="b g" style="left:1218px;top:169px;width:23px">23</span>
<span class="b y" style="left:1245px;top:169px;width:38px"><svg><use href="#warn"/></svg>23</span>
<span class="b g" style="left:1218px;top:189px;width:18px">1</span>

<div class="t ti" style="left:1429px;top:145px">RECHNUNGEN</div>
<div class="t r" style="left:1429px;top:167px">Unbezahlte</div>
<span class="b g" style="left:1561px;top:169px;width:24px">19</span>
<span class="b y" style="left:1589px;top:169px;width:31px"><svg><use href="#warn"/></svg>5</span>

<div class="t ti" style="left:398px;top:261px">LIEFERANTENBESTELLUNGEN</div>
<div class="t r" style="left:398px;top:283px">Offen</div>
<div class="t r" style="left:398px;top:303px">Warten auf Empfa…</div>
<span class="b g" style="left:531px;top:285px;width:17px">1</span>
<span class="b y" style="left:552px;top:285px;width:32px"><svg><use href="#warn"/></svg>1</span>
<span class="b g" style="left:531px;top:305px;width:17px">1</span>

<div class="t ti" style="left:741px;top:261px">LIEFERANTENRECHNUNGEN</div>
<div class="t r" style="left:741px;top:283px">Zu zahlen</div>
<span class="b g" style="left:874px;top:285px;width:18px">7</span>
<span class="b y" style="left:896px;top:285px;width:31px"><svg><use href="#warn"/></svg>6</span>

<div class="t ti" style="left:1085px;top:261px">TICKETS</div>
<div class="t r" style="left:1085px;top:283px">Offene Tickets</div>
<span class="b g" style="left:1218px;top:285px;width:18px">4</span>

<div class="t ti" style="left:1429px;top:261px">BANKKONTO</div>
<div class="t r" style="left:1429px;top:283px">Abzugleichen</div>
<div class="t r" style="left:1429px;top:303px">Schecks warten a…</div>
<span class="b g" style="left:1561px;top:285px;width:24px">20</span>
<span class="b y" style="left:1588px;top:285px;width:38px"><svg><use href="#warn"/></svg>20</span>
<span class="b g" style="left:1561px;top:305px;width:18px">3</span>
<span class="b y" style="left:1582px;top:305px;width:32px"><svg><use href="#warn"/></svg>3</span>

<div class="t ti" style="left:398.500px;top:376.500px">SPESENABRECHNUNG</div>
<div class="t r" style="left:398px;top:399px">Zu genehmigen</div>
<div class="t r" style="left:398px;top:418.500px">Zu zahlen</div>
<div class="t r" style="left:531px;top:399px;color:#a9a9bb">0</div>
<span class="b g" style="left:531px;top:421px;width:17px">1</span>
<span class="b y" style="left:552px;top:421px;width:31px"><svg><use href="#warn"/></svg>1</span>

<div class="t ti" style="left:741px;top:376.500px">ABWESENHEITEN</div>
<div class="t r" style="left:741px;top:399px">Zu genehmigen</div>
<div class="t r" style="left:874px;top:399px;color:#a9a9bb">0</div>

<!-- Panel Fertigung -->
<div class="p" style="left:301px;top:519px;width:660px;height:146px">
<div class="ph" style="height:44px"></div><div class="ev" style="top:77px;height:34px"></div>
<div class="se" style="top:77px"></div><div class="se" style="top:110px"></div></div>
<div class="t h" style="left:314px;top:532.500px">Neueste 3 Fertigungsaufträge, die geändert wurden</div>
<svg class="mv" style="left:915px;top:534px"><use href="#mv"/></svg><svg class="cl" style="left:940px;top:534px"><use href="#cl"/></svg>
<svg class="ic cs" style="left:314px;top:572px"><use href="#cubes"/></svg><div class="t n" style="left:333px;top:570.500px">(PROV22)</div>
<svg class="ic cu" style="left:557px;top:572px"><use href="#cubef"/></svg><div class="t n" style="left:576px;top:570.500px">APPLEPIE</div>
<div class="t" style="left:798px;top:570.500px">17.01.2023</div><div class="k o" style="left:933px;top:572px"></div>
<svg class="ic cs" style="left:314px;top:606px"><use href="#cubes"/></svg><div class="t n" style="left:333px;top:604.500px">(PROV23)</div>
<svg class="ic cu" style="left:557px;top:606px"><use href="#cubef"/></svg><div class="t n" style="left:576px;top:604.500px">APPLEPIE</div>
<div class="t" style="left:798px;top:604.500px">26.12.2022</div><div class="k o" style="left:933px;top:606px"></div>
<svg class="ic cs" style="left:314px;top:640px"><use href="#cubes"/></svg><div class="t n" style="left:333px;top:638.500px">MO1912-0002</div>
<svg class="ic cu" style="left:557px;top:640px"><use href="#cubef"/></svg><div class="t n" style="left:576px;top:638.500px">APPLEPIE</div>
<div class="t" style="left:798px;top:638.500px">13.01.2020</div><div class="k" style="left:933px;top:640px;background:#c9d2d2"></div>

<!-- Panel Salden -->
<div class="p" style="left:301px;top:704px;width:660px;height:180px">
<div class="ph" style="height:45px"></div><div class="ev" style="top:77px;height:34px"></div>
<div class="se" style="top:77px"></div><div class="se" style="top:111px"></div><div class="se" style="top:144px"></div></div>
<div class="t h" style="left:314px;top:718px">Salden offene Konten</div>
<span class="b g" style="left:459.500px;top:719px;width:21px;height:18px;line-height:12px;align-items:flex-end">...</span>
<svg class="mv" style="left:915px;top:719px"><use href="#mv"/></svg><svg class="cl" style="left:940px;top:719px"><use href="#cl"/></svg>
<svg class="ic bk" style="left:314px;top:757px"><use href="#bank"/></svg><div class="t n" style="left:333px;top:757px">ACCOUNTCASH</div><div class="t n rt" style="right:747px;top:757px">-329,29 €</div>
<svg class="ic bk" style="left:314px;top:790px"><use href="#bank"/></svg><div class="t n" style="left:333px;top:790px">ccc</div><div class="t n rt" style="right:747px;top:790px">-6,00 €</div>
<svg class="ic bk" style="left:314px;top:824px"><use href="#bank"/></svg><div class="t n" style="left:333px;top:824px">LUXBAC</div><div class="t n rt" style="right:747px;top:824px">-511,81 €</div>
<div class="t" style="left:314px;top:857px;color:#888">Gesamt EUR</div><div class="t rt" style="right:747px;top:857px;color:#0b6b5e">-847,10 €</div>

<!-- Panel BOM -->
<div class="p" style="left:301px;top:923px;width:660px;height:146px">
<div class="ph" style="height:44px"></div><div class="ev" style="top:77px;height:33px"></div>
<div class="se" style="top:77px"></div><div class="se" style="top:109px"></div></div>
<div class="t h" style="left:314px;top:936.500px">Neueste 3 Stücklisten, die geändert wurden</div>
<svg class="mv" style="left:915px;top:938px"><use href="#mv"/></svg><svg class="cl" style="left:940px;top:938px"><use href="#cl"/></svg>
<svg class="ic cu" style="left:314px;top:975px"><use href="#bom"/></svg><div class="t n" style="left:333px;top:975px">BOM2202-0002</div>
<svg class="ic cu" style="left:555px;top:975px"><use href="#cubef"/></svg><div class="t n" style="left:575px;top:975px">ROLLUPABC</div>
<div class="t" style="left:804px;top:975px">27.02.2023</div><div class="k o" style="left:933px;top:976px"></div>
<svg class="ic cu" style="left:314px;top:1009px"><use href="#bom"/></svg><div class="t n" style="left:333px;top:1009px">(PROV8)</div>
<svg class="ic cu" style="left:555px;top:1009px"><use href="#cubef"/></svg><div class="t n" style="left:575px;top:1009px">PINKDRESS</div>
<div class="t" style="left:804px;top:1009px">31.01.2023</div><div class="k o" style="left:933px;top:1010px"></div>
<svg class="ic cu" style="left:314px;top:1042px"><use href="#bom"/></svg><div class="t n" style="left:333px;top:1041.500px">BOM1911-0001</div>
<svg class="ic cu" style="left:555px;top:1042px"><use href="#cubef"/></svg><div class="t n" style="left:575px;top:1041.500px">APPLEPIE</div>
<div class="t" style="left:804px;top:1041.500px">08.01.2020</div><div class="k" style="left:933px;top:1043px;background:#25a580"></div>

<!-- Panel Jobs -->
<div class="p" style="left:1001px;top:519px;width:660px;height:147px">
<div class="ph" style="height:44px"></div><div class="ev" style="top:78px;height:34px"></div>
<div class="se" style="top:78px"></div><div class="se" style="top:112px"></div></div>
<div class="t h" style="left:1014px;top:532.500px">Geplante Jobs</div>
<svg class="mv" style="left:1615px;top:534px"><use href="#mv"/></svg><svg class="cl" style="left:1640px;top:534px"><use href="#cl"/></svg>
<div class="t" style="left:1014px;top:571.500px">Zuletzt ausgeführter geplanter Job</div>
<svg style="left:1294px;top:572px;width:19px;height:17px;fill:#555"><use href="#job"/></svg><div class="t n" style="left:1317px;top:571.500px">40</div>
<div class="t" style="left:1419px;top:571.500px">16.07.2025 15:45:01</div>
<svg style="left:1558px;top:574px;width:13px;height:13px;fill:#ccc"><use href="#info"/></svg><div class="k" style="left:1633px;top:572px;background:#25a580"></div>
<div class="t" style="left:1014px;top:606px">Nächster geplanter Job, der ausgefü…</div>
<svg style="left:1294px;top:606px;width:19px;height:17px;fill:#555"><use href="#job"/></svg><div class="t n" style="left:1317px;top:606px">40</div>
<div class="t" style="left:1419px;top:606.500px">16.07.2025 15:45:01</div>
<svg style="left:1558px;top:609px;width:13px;height:13px;fill:#ccc"><use href="#info"/></svg><div class="k" style="left:1633px;top:607px;background:#25a580"></div>
<div class="t" style="left:1014px;top:640px">Anzahl der fehlerhaften geplanten Jobs</div>
<span class="b" style="left:1631px;top:641px;width:19px;height:18px;background:#25a580">0</span>

<!-- Panel Tickets -->
<div class="p" style="left:1001px;top:706px;width:660px;height:146px">
<div class="ph" style="height:44px"></div><div class="ev" style="top:77px;height:34px"></div>
<div class="se" style="top:77px"></div><div class="se" style="top:111px"></div></div>
<div class="t h" style="left:1014px;top:719.500px">Neueste Tickets (maximal 3)…</div>
<svg class="mv" style="left:1615px;top:721px"><use href="#mv"/></svg><svg class="cl" style="left:1640px;top:721px"><use href="#cl"/></svg>
<svg class="tk" style="left:1014px;top:758px;width:17px;height:17px"><use href="#tick"/></svg><div class="t n" style="left:1034.500px;top:757.500px">TS1911-0005</div><div class="t n" style="left:1147px;top:757.500px">What is the price for Dolibarr…</div><div class="t n" style="left:1371px;top:757.500px">customer@c…</div><div class="t" style="left:1496px;top:757.500px">29.11.2024 13:50</div><div class="k" style="left:1633px;top:759px;background:#c9d2d2"></div>
<svg class="tk" style="left:1014px;top:792px;width:17px;height:17px"><use href="#tick"/></svg><div class="t n" style="left:1034.500px;top:791.500px">TS1911-0004</div><div class="t n" style="left:1147px;top:791.500px">What is the price for Dolibarr…</div><div class="t" style="left:1496px;top:791.500px">29.11.2024 13:46</div><div class="k" style="left:1633px;top:793px;background:#a09a2a"></div>
<svg class="tk" style="left:1014px;top:826px;width:17px;height:17px"><use href="#tick"/></svg><div class="t n" style="left:1034.500px;top:825.500px">TS1910-0003</div><div class="t n" style="left:1147px;top:825.500px">test</div><div class="t" style="left:1496px;top:825.500px">04.10.2024 14:58</div><div class="k" style="left:1633px;top:827px;background:#a09a2a"></div>

<!-- Panel Ereignisse -->
<div class="p" style="left:1001px;top:891px;width:660px;height:147px">
<div class="ph" style="height:44px"></div><div class="ev" style="top:78px;height:34px"></div>
<div class="se" style="top:78px"></div><div class="se" style="top:112px"></div></div>
<div class="t h" style="left:1014px;top:904.500px">Älteste zu erledigende Ereignisse, die nicht abgeschlossen…</div>
<svg class="mv" style="left:1615px;top:906px"><use href="#mv"/></svg><svg class="cl" style="left:1640px;top:906px"><use href="#cl"/></svg>
<svg class="cal" style="left:1013px;top:945px;width:14px;height:15px"><use href="#cal"/></svg><div class="t n" style="left:1031.500px;top:943.500px">aaa</div>
<svg class="wr" style="left:1059px;top:944px;width:17px;height:17px"><use href="#warn"/></svg>
<svg style="left:1251px;top:945px;width:16px;height:15px;fill:#6b6fae"><use href="#bld"/></svg><div class="t n" style="left:1269.500px;top:943.500px">Book Keeping …</div>
<div class="t" style="left:1589px;top:943.500px">0%</div><div class="k" style="left:1633px;top:944px;background:#be9628"></div>
<svg class="cal" style="left:1013px;top:979px;width:14px;height:15px"><use href="#cal"/></svg><div class="t n" style="left:1031.500px;top:977.500px">RDV avec mon chef</div>
<svg class="wr" style="left:1165px;top:978px;width:17px;height:17px"><use href="#warn"/></svg>
<div class="t" style="left:1424px;top:977.500px">10.07.2012 17:21</div><div class="t" style="left:1589px;top:977.500px">0%</div><div class="k" style="left:1633px;top:979px;background:#be9628"></div>
<svg class="cal" style="left:1013px;top:1013px;width:14px;height:15px"><use href="#cal"/></svg><div class="t n" style="left:1031.500px;top:1011.500px">Rendez-vous</div>
<svg class="wr" style="left:1121px;top:1012px;width:17px;height:17px"><use href="#warn"/></svg>
<div class="t" style="left:1425px;top:1011.500px">11.07.2012 19:11</div><div class="t" style="left:1589px;top:1011.500px">0%</div><div class="k" style="left:1633px;top:1013px;background:#be9628"></div>

<div class="p" style="left:1001px;top:1077px;width:660px;height:10px;background:#f0f0f0;border-bottom:0;border-radius:7px 7px 0 0"></div>
</body></html>
